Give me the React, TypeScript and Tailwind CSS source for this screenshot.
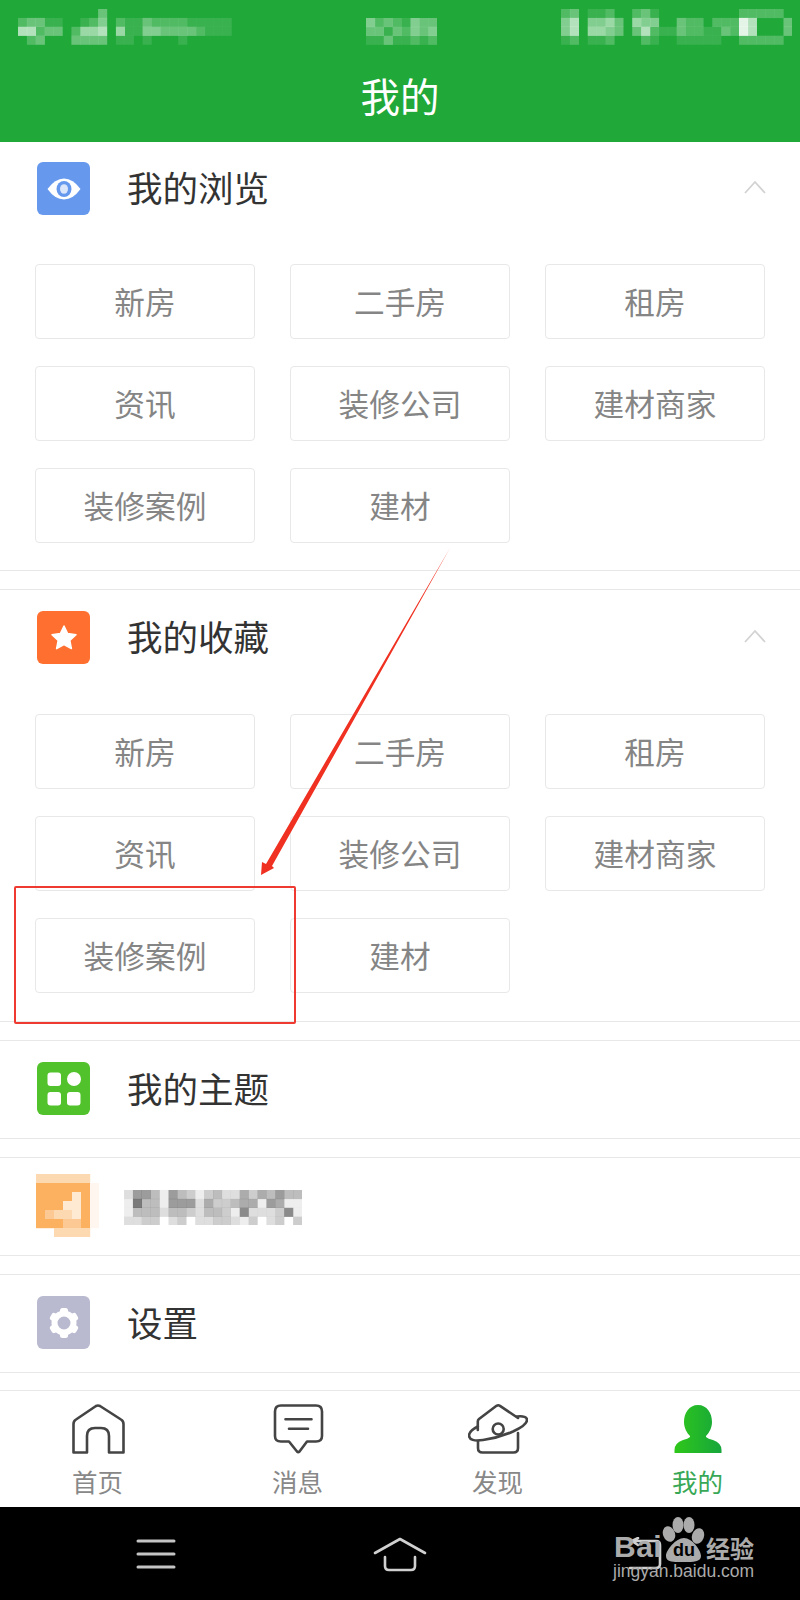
import React from "react";

const CJK = { fontFamily: '"Noto Sans CJK SC", "Noto Sans", sans-serif' };

function Mosaic({ rows, fill = "#fff", unit, cell = 8.9 }: { rows: string[]; fill?: string; unit: number; cell?: number }) {
  const w = rows[0].length * cell;
  const h = rows.length * cell;
  return (
    <svg width={w} height={h} viewBox={`0 0 ${w} ${h}`} className="block shrink-0 blur-[0.5px]">
      {rows.map((r, y) =>
        r.split("").map((d, x) =>
          d === "0" ? null : (
            <rect key={`${x}-${y}`} x={x * cell} y={y * cell} width={cell + 0.2} height={cell + 0.2} fill={fill} fillOpacity={Number(d) * unit} />
          ),
        ),
      )}
    </svg>
  );
}

function Avatar() {
  const o = "#fbb15f", a = "#fcc894", b = "#fdd9b2", c = "#fee9d3", d = "#fff7ef";
  const grid = [
    [b, b, b, b, b, b, ""],
    [o, o, o, o, o, o, d],
    [o, o, o, o, c, o, d],
    [o, o, o, c, c, o, d],
    [o, a, b, b, c, o, d],
    [o, o, o, a, a, o, d],
    ["", "", b, b, b, b, ""],
  ];
  return (
    <svg width="63" height="63" viewBox="0 0 63 63" className="block blur-[0.5px]">
      {grid.map((r, y) => r.map((f, x) => (f ? <rect key={`${x}-${y}`} x={x * 9} y={y * 9} width="9.2" height="9.2" fill={f} /> : null)))}
    </svg>
  );
}

function IconBox({ color, children }: { color: string; children: React.ReactNode }) {
  return (
    <div className={`w-[53px] h-[53px] rounded-[6px] flex items-center justify-center shrink-0 ${color}`}>
      {children}
    </div>
  );
}

const Eye = () => (
  <svg width="34" height="22" viewBox="0 0 34 22">
    <path d="M0.5 11 Q8 0.5 17 0.5 Q26 0.5 33.5 11 Q26 21.5 17 21.5 Q8 21.5 0.5 11Z" fill="#fff" />
    <ellipse cx="17" cy="11" rx="7.5" ry="8" fill="#6699ee" />
    <ellipse cx="17" cy="11" rx="4" ry="4.8" fill="#dbe6fa" />
  </svg>
);
const Star = () => (
  <svg width="30" height="30" viewBox="0 0 30 30">
    <path d="M15 3 L18.6 10.6 L27 11.7 L20.8 17.4 L22.4 25.6 L15 21.6 L7.6 25.6 L9.2 17.4 L3 11.7 L11.4 10.6 Z" fill="#fff" stroke="#fff" strokeWidth="1.5" strokeLinejoin="round" />
  </svg>
);
const Blocks = () => (
  <svg width="34" height="34" viewBox="0 0 34 34">
    <rect x="0.5" y="0.5" width="13.5" height="13.5" rx="3" fill="#fff" />
    <circle cx="27" cy="7" r="7" fill="#fff" />
    <rect x="0.5" y="20" width="13.5" height="13.5" rx="3" fill="#fff" />
    <rect x="20" y="20" width="13.5" height="13.5" rx="3" fill="#fff" />
  </svg>
);
const Gear = () => (
  <svg width="32" height="32" viewBox="0 0 32 32">
    <g fill="#fff">
      {[0, 60, 120, 180, 240, 300].map((r) => (
        <rect key={r} x="12" y="1" width="8" height="8" rx="2.5" transform={`rotate(${r} 16 16)`} />
      ))}
    </g>
    <circle cx="16" cy="16" r="9.5" fill="none" stroke="#fff" strokeWidth="6" />
  </svg>
);

const Chevron = () => (
  <svg width="24" height="14" viewBox="0 0 24 14" className="block">
    <path d="M2 13 L12 2 L22 13" fill="none" stroke="#d2d2d2" strokeWidth="1.8" />
  </svg>
);

const ROW = ["新房", "二手房", "租房", "资讯", "装修公司", "建材商家", "装修案例", "建材"];

function Section({ icon, title, className, headClass }: { icon: React.ReactNode; title: string; className: string; headClass: string }) {
  return (
    <section className={`border-b border-[#e8e8e8] ${className}`}>
      <div className={`flex items-start pl-[37px] pr-[33px] ${headClass}`}>
        {icon}
        <h2 className="ml-[37px] mt-[-2px] text-[35.5px] leading-[54px] font-normal text-[#333] flex-1">{title}</h2>
        <div className="mt-[18px]">
          <Chevron />
        </div>
      </div>
      <div className="grid grid-cols-3 gap-x-[35px] gap-y-[27px] px-[35px]">
        {ROW.map((t) => (
          <div key={t} className="h-[75px] border border-[#e8e8e8] rounded-[4px] flex items-center justify-center text-[30.7px] text-[#858585]">
            {t}
          </div>
        ))}
      </div>
    </section>
  );
}

function Item({ icon, title, className = "mt-[18px]" }: { icon: React.ReactNode; title: React.ReactNode; className?: string }) {
  return (
    <div className={`h-[99px] border-y border-[#e8e8e8] flex items-center pl-[37px] ${className}`}>
      <div className="mt-[-2px]">{icon}</div>
      <div className="ml-[37px] mt-[-3px] text-[35.5px] text-[#333]">{title}</div>
    </div>
  );
}

function Tab({ label, active, children }: { label: string; active?: boolean; children: React.ReactNode }) {
  return (
    <div className="flex flex-col items-center pr-[5px] pt-[9px]">
      <svg width="60" height="60" viewBox="0 0 60 60" fill="none" stroke="#444" strokeWidth="2.6" strokeLinejoin="round" strokeLinecap="round">
        {children}
      </svg>
      <div className={`text-[25.5px] leading-[30px] mt-[6px] ${active ? "text-[#38a856]" : "text-[#888]"}`}>{label}</div>
    </div>
  );
}

export default function App() {
  return (
    <div className="relative w-[800px] h-[1600px] overflow-hidden bg-white flex flex-col" style={CJK}>
      <header className="h-[142px] bg-[#20a839] flex flex-col shrink-0">
        <div className="flex h-[54px] pl-[18px]">
          <div className="mt-[9px]">
            <Mosaic
              unit={0.11}
              rows={[
                "000000000300000000000000",
                "233110012402113222211111",
                "662330255605114433332111",
                "023000333301101000100000",
              ]}
            />
          </div>
          <div className="ml-[134px] mt-[18px]">
            <Mosaic unit={0.11} rows={["42321433", "33132434", "11311212"]} />
          </div>
          <div className="ml-[124px] mt-[9px]">
            <Mosaic
              unit={0.11}
              rows={[
                "23011200231000000000222220",
                "46044530544003220222860003",
                "46055430362113221132860003",
                "12011200021001111100222220",
              ]}
            />
          </div>
        </div>
        <h1 className="flex-1 flex items-center justify-center text-[39.5px] font-normal text-white pb-[6px]">我的</h1>
      </header>

      <main className="flex-1 flex flex-col">
        <Section className="pt-[20px] pb-[27px]" headClass="h-[54px] mb-[48px]" icon={<IconBox color="bg-[#6699ee]"><Eye /></IconBox>} title="我的浏览" />
        <Section className="border-t mt-[18px] pt-[21px] pb-[28px]" headClass="h-[55px] mb-[48px]" icon={<IconBox color="bg-[#ff7030]"><Star /></IconBox>} title="我的收藏" />
        <Item icon={<IconBox color="bg-[#52c22c]"><Blocks /></IconBox>} title="我的主题" />
        <Item
          icon={<div className="w-[53px] shrink-0 ml-[-1px]"><Avatar /></div>}
          title={
            <div className="ml-[-2px] mt-[5px]">
              <Mosaic
                unit={0.065}
                fill="#000"
                rows={[
                  "26641643134225354644",
                  "18441666253345516511",
                  "14442443244317222371",
                  "22330230223321302303",
                ]}
              />
            </div>
          }
        />
        <Item icon={<IconBox color="bg-[#b9b9d0]"><Gear /></IconBox>} title="设置" />
      </main>

      <nav className="h-[117px] shrink-0 border-t border-[#e8e8e8] grid grid-cols-4">
        <Tab label="首页">
          <path d="M5.5 52.5 V24 Q5.5 21 8 19.5 L28 6 Q30 5 32 6 L53 19.5 Q55.5 21 55.5 24 V52.5 H41 V36 Q41 28 33 28 H27 Q19 28 19 36 V52.5 Z" />
        </Tab>
        <Tab label="消息">
          <path d="M13 5.5 H48 Q54 5.5 54 11.5 V36 Q54 41.5 48 41.5 H39 L31.5 51.5 Q30.2 52.7 29 51.5 L21 41.5 H13 Q7 41.5 7 36 V11.5 Q7 5.5 13 5.5Z" />
          <path d="M17.5 19.3 H43.5 M21 28.7 H40" />
        </Tab>
        <Tab label="发现">
          <path d="M9.8 30 V21.5 Q9.8 20 11 19 L28.5 5.8 Q30.2 4.8 32 5.8 L50 18" />
          <path d="M9.8 26.5 Q1 31 1 35.5 Q1.5 42 15 40 Q30 38 45 31.5 Q59 25 59 20 Q59 15.5 49 16.5" />
          <path d="M10 41 V48 Q10 52.5 14.5 52.5 H45.5 Q50 52.5 50 48 V33" />
          <circle cx="30.2" cy="29" r="5.5" />
        </Tab>
        <Tab label="我的" active>
          <defs>
            <linearGradient id="person" x1="0" y1="0" x2="1" y2="0">
              <stop offset="0" stopColor="#2fc71a" />
              <stop offset="1" stopColor="#16a63c" />
            </linearGradient>
          </defs>
          <path
            stroke="none"
            fill="url(#person)"
            d="M30 5 C39 5 44 13 44 22 C44 28 41 33 38 36 V37 Q40 39 45 40 Q53.5 43 53.5 50 V53 H6.5 V50 Q6.5 43 15 40 Q20 39 22 37 V36 C19 33 16 28 16 22 C16 13 21 5 30 5Z"
          />
        </Tab>
      </nav>

      <footer className="h-[93px] shrink-0 bg-black grid grid-cols-3 px-[34px] items-center justify-items-center">
        <svg width="40" height="32" viewBox="0 0 40 32" fill="none" stroke="#c4c4c4" strokeWidth="3" strokeLinecap="round">
          <path d="M2 3 H38 M2 16 H38 M2 29 H38" />
        </svg>
        <svg width="56" height="36" viewBox="0 0 56 36" fill="none" stroke="#d0d0d0" strokeWidth="2.6" strokeLinecap="round" strokeLinejoin="round">
          <path d="M3 17 L28 3 L53 17" />
          <path d="M13 21 V30 Q13 34 17 34 H39 Q43 34 43 30 V21" />
        </svg>
        <svg width="40" height="34" viewBox="0 0 40 34" fill="none" stroke="#d0d0d0" strokeWidth="2.6" strokeLinecap="round" strokeLinejoin="round">
          <path d="M8 4 H32 Q36 4 36 8 V27 Q36 31 32 31 H6 M8 4 L14 1 M8 4 L14 8" />
        </svg>
      </footer>

      {/* Annotation overlay */}
      <div className="absolute left-[14px] top-[886px] w-[282px] h-[138px] border-2 border-[#ee3a30] rounded-[2px]" />
      <svg className="absolute left-0 top-0" width="800" height="1600" viewBox="0 0 800 1600">
        <polygon points="450,548 272,866 274,868 261,875 262,862 266,864" fill="#f03020" />
      </svg>

      {/* Watermark */}
      <div className="absolute left-[613px] top-[1512px] w-[150px] h-[80px] text-[#ababab]">
        <span className="absolute left-[1px] top-[20px] text-[30px] leading-[30px] font-bold tracking-[0.5px]" style={{ fontFamily: '"Liberation Sans", sans-serif' }}>Bai</span>
        <svg className="absolute left-[48px] top-[2px]" width="50" height="56" viewBox="0 0 50 56" fill="#ababab">
          <ellipse cx="8" cy="20" rx="6" ry="8" transform="rotate(-20 8 20)" />
          <ellipse cx="17" cy="11" rx="5.5" ry="8" />
          <ellipse cx="28" cy="11" rx="5.5" ry="8" />
          <ellipse cx="37" cy="22" rx="6" ry="8" transform="rotate(20 37 22)" />
          <path d="M23 24 C31 24 40 36 40 42 C40 48 32 48 23 48 C14 48 5 49 5 42 C5 36 15 24 23 24Z" />
        </svg>
        <span className="absolute left-[60px] top-[28px] text-[18px] leading-[20px] font-bold text-black" style={{ fontFamily: '"Liberation Sans", sans-serif' }}>du</span>
        <span className="absolute left-[93px] top-[24px] text-[24px] leading-[24px] font-bold">经验</span>
        <span className="absolute left-0 top-[49px] text-[17.5px] leading-[21px] whitespace-nowrap" style={{ fontFamily: '"Liberation Sans", sans-serif' }}>jingyan.baidu.com</span>
      </div>
    </div>
  );
}
